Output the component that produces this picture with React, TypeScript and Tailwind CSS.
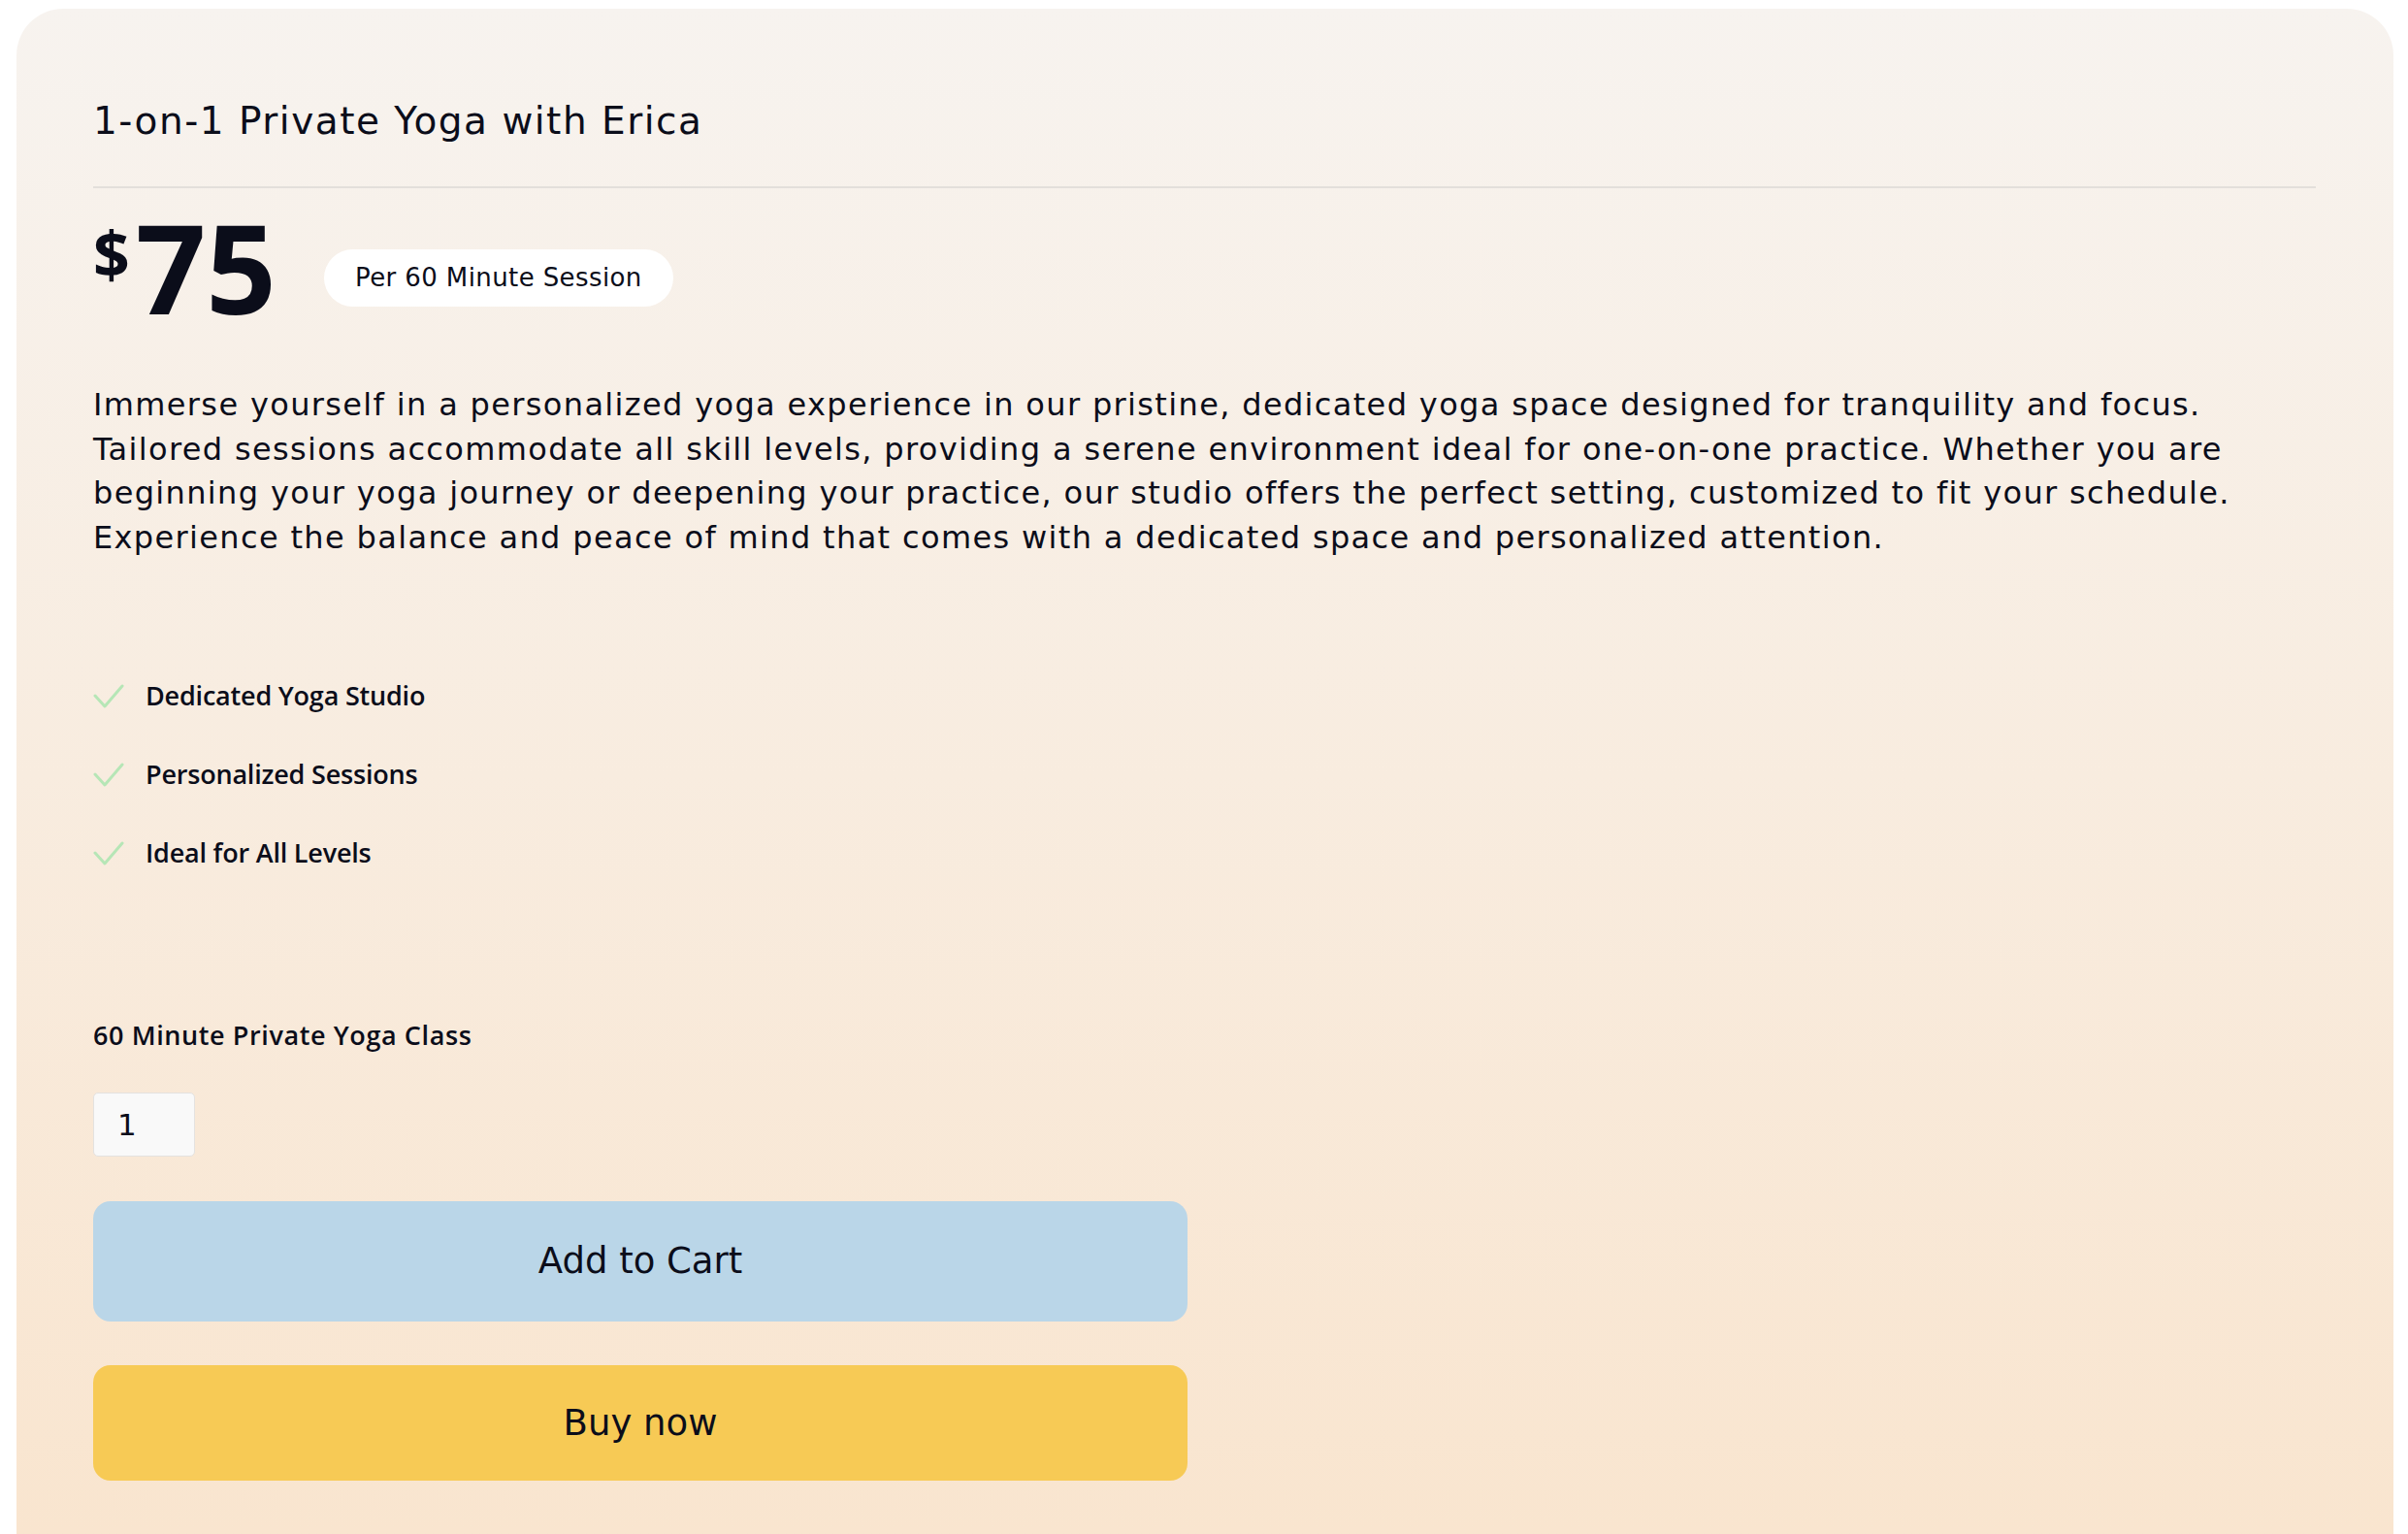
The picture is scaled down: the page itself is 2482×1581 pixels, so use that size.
export default function App() {
  const features = ["Dedicated Yoga Studio", "Personalized Sessions", "Ideal for All Levels"];

  return (
    <div className="min-h-screen bg-white pl-[17px] pr-[15px] pt-[9px] font-['DejaVu_Sans',sans-serif] text-[#0b0d1a]">
      <div className="h-[1572px] rounded-t-[48px] bg-gradient-to-b from-[#f7f3ef] to-[#f9e5cf] pl-[79px] pr-[80px] pt-[92px]">
        {/* Title */}
        <h1 className="text-[39px] leading-[48px] font-normal tracking-[1.5px]">1-on-1 Private Yoga with Erica</h1>
        <div className="mt-[43px] h-[2px] bg-[#e3dfdb]" />

        {/* Price */}
        <div className="mt-[17px] flex items-start gap-[49px] font-['Open_Sans',sans-serif]">
          <div className="flex items-start font-bold leading-none">
            <span className="mt-[17px] text-[66px]">$</span>
            <span className="ml-[6px] text-[127px]">75</span>
          </div>
          <span className="mt-[46px] rounded-full bg-white px-[32px] py-[13px] font-['DejaVu_Sans',sans-serif] text-[26px] leading-[33px] tracking-[0.4px]">
            Per 60 Minute Session
          </span>
        </div>

        {/* Description */}
        <p className="mt-[57px] text-[32px] leading-[45.5px] tracking-[1.35px]">
          Immerse yourself in a personalized yoga experience in our pristine, dedicated yoga space designed for
          tranquility and focus. Tailored sessions accommodate all skill levels, providing a serene environment ideal
          for one-on-one practice. Whether you are beginning your yoga journey or deepening your practice, our studio
          offers the perfect setting, customized to fit your schedule. Experience the balance and peace of mind that
          comes with a dedicated space and personalized attention.
        </p>

        {/* Features */}
        <ul className="mt-[120px] flex flex-col gap-[41px] font-['Open_Sans',sans-serif]">
          {features.map((f) => (
            <li key={f} className="flex h-[40px] items-center gap-[22px]">
              <svg width="32" height="25" viewBox="0 0 32 25" fill="none" className="shrink-0">
                <path d="M2 12 L12 23 L30 2" stroke="#b6e6b6" strokeWidth="3" strokeLinecap="round" strokeLinejoin="round" />
              </svg>
              <span className="text-[27px] font-semibold tracking-[-0.2px]">{f}</span>
            </li>
          ))}
        </ul>

        {/* Variant label */}
        <div className="mt-[150px] font-['Open_Sans',sans-serif] text-[27px] font-semibold leading-[36px] tracking-[0.6px]">
          60 Minute Private Yoga Class
        </div>

        {/* Quantity */}
        <div className="mt-[41px] flex h-[66px] w-[105px] items-center rounded-[5px] border border-[#e4e2e0] bg-[#f9f9f9] pl-[24px] text-[31px]">
          1
        </div>

        {/* Buttons */}
        <div className="mt-[46px] flex w-[1128px] flex-col gap-[45px]">
          <button className="flex h-[124px] items-center justify-center rounded-[18px] bg-[#bad6e8] text-[37px]">
            Add to Cart
          </button>
          <button className="flex h-[119px] items-center justify-center rounded-[18px] bg-[#f7ca55] text-[37px]">
            Buy now
          </button>
        </div>
      </div>
    </div>
  );
}
